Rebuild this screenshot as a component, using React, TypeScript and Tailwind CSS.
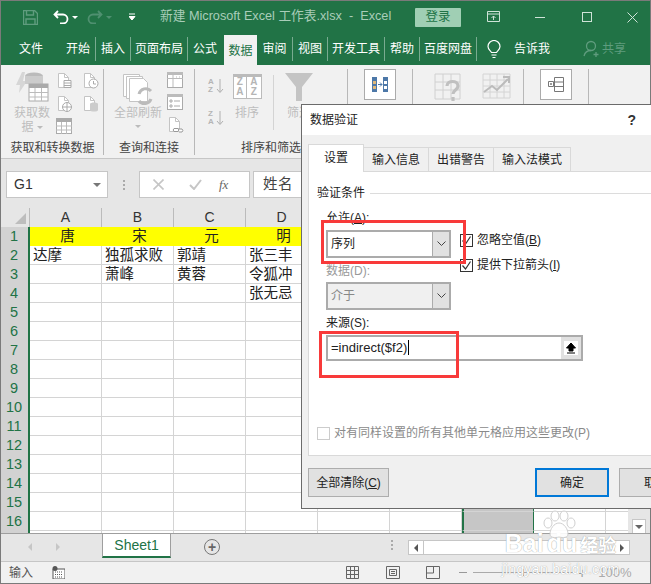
import type { ReactNode } from 'react'

const G = '#c4c4c4'

function Ico({ w = 16, h = 16, children, className = '' }: { w?: number; h?: number; children: ReactNode; className?: string }) {
  return (
    <svg width={w} height={h} viewBox={`0 0 ${w} ${h}`} fill="none" className={`block shrink-0 ${className}`}>
      {children}
    </svg>
  )
}

function DocIcon({ mark }: { mark: 'lines' | 'clock' | 'web' | 'db' | 'link' }) {
  return (
    <Ico w={17} h={17}>
      <path d="M2.5 1.5h6l4 4v10h-10z" stroke={G} fill="#fff" />
      <path d="M8.5 1.5v4h4" stroke={G} />
      {mark === 'lines' && <path d="M8 8.5h7v7H8zM8 11h7M8 13.5h7" stroke="#aaa" fill="#fff" />}
      {mark === 'clock' && (
        <>
          <circle cx="11.5" cy="11.5" r="4.5" stroke="#aaa" fill="#fff" />
          <path d="M11.5 9v3h2.5" stroke="#aaa" />
        </>
      )}
      {mark === 'web' && (
        <>
          <circle cx="11" cy="12" r="4.5" stroke="#aaa" fill="#fff" />
          <path d="M6.5 12h9M11 7.5v9" stroke="#aaa" />
        </>
      )}
      {mark === 'db' && <path d="M8 9c0-2 8-2 8 0v6c0 2-8 2-8 0z" fill="#ccc" />}
      {mark === 'link' && <path d="M7 12.5h4a2 2 0 010 3H7a2 2 0 010-3zM11 13h4a2 2 0 010 3h-3" stroke="#999" fill="#fff" />}
    </Ico>
  )
}

function TableIcon() {
  return (
    <Ico w={16} h={16}>
      <rect x="0.5" y="0.5" width="15" height="15" stroke="#aaa" fill="#fff" />
      <rect x="0" y="0" width="16" height="4" fill="#aaa" />
      <path d="M0 8h16M0 12h16M5.5 4v12M10.5 4v12" stroke="#bbb" />
    </Ico>
  )
}

function PanelIcon({ list = false }: { list?: boolean }) {
  return (
    <Ico w={16} h={16}>
      <rect x="0.5" y="0.5" width="15" height="15" stroke="#aaa" fill="#fff" />
      <rect x="0" y="0" width="16" height="3" fill="#bbb" />
      {list ? (
        <path d="M3 6h2v2H3zM3 11h2v2H3zM7 7h6M7 12h6" stroke="#aaa" />
      ) : (
        <path d="M6 3v12M0 6.5h16M9 5h1M12 5h1" stroke="#bbb" />
      )}
    </Ico>
  )
}

function SortIcon({ top, bottom }: { top: string; bottom: string }) {
  return (
    <div className="flex h-[16px] w-[16px] items-center">
      <div className="flex w-[8px] flex-col text-[8px] leading-[8px] font-bold text-[#b5b5b5]">
        <span>{top}</span>
        <span>{bottom}</span>
      </div>
      <Ico w={8} h={16}>
        <path d="M4 1v13M1 11l3 3.5 3-3.5" stroke="#b0b0b0" />
      </Ico>
    </div>
  )
}

function RibbonGroup({ label, className, children }: { label: string; className: string; children: ReactNode }) {
  return (
    <div className={`flex shrink-0 flex-col border-r border-[#b8b8b8] mt-[4px] h-[86px] ${className}`}>
      <div className="relative h-[69px]">{children}</div>
      <div className="mt-[4px] text-center text-[12px] leading-[14px] whitespace-nowrap text-[#444]">{label}</div>
    </div>
  )
}

function BoxButton({ children }: { children: ReactNode }) {
  return (
    <div className="mx-auto flex h-[31px] w-[32px] items-center justify-center border border-[#ababab] bg-white">{children}</div>
  )
}

const dim = 'text-[#bdbdbd]'

function TitleBar() {
  return (
    <div className="flex h-[32px] items-center bg-[#217346]">
      <Ico w={15} h={15} className="ml-[22px]">
        <path d="M.5.5h11l3 3v11H.5z" stroke="#5f9c7e" strokeWidth="1.4" />
        <path d="M3.5 1v4h7V1M3 14V9h9v5" stroke="#5f9c7e" strokeWidth="1.4" />
      </Ico>
      <Ico w={16} h={14} className="ml-[15px]">
        <path d="M5 1L1.5 4.5 5 8M2 4.5h8a4.5 4.5 0 010 9H7" stroke="#fff" strokeWidth="1.8" />
      </Ico>
      <span className="ml-[3px] border-x-[3px] border-t-[3px] border-x-transparent border-t-white" />
      <Ico w={16} h={14} className="ml-[9px]">
        <path d="M11 1l3.5 3.5L11 8M14 4.5H6a4.5 4.5 0 000 9h3" stroke="#4f9070" strokeWidth="1.8" />
      </Ico>
      <span className="ml-[3px] border-x-[3px] border-t-[3px] border-x-transparent border-t-[#4f9070]" />
      <Ico w={7} h={8} className="ml-[17px]">
        <path d="M0 1h6M0 3.5h6L3 7z" stroke="#fff" fill="#fff" strokeWidth="1" />
      </Ico>
      <span className="ml-[24px] w-[255px] text-[12.7px] whitespace-pre text-[#a9cdb9]">新建 Microsoft Excel 工作表.xlsx  -  Excel</span>
      <div className="ml-[0px] flex h-[19px] w-[46px] items-center justify-center rounded-[1px] bg-[#a0cfb4] text-[12.5px] text-[#217346]">登录</div>
      <Ico w={14} h={12} className="ml-[26px]">
        <path d="M.5.5h12v10H.5zM.5 3h12M6.5 9V5M4.5 7l2-2 2 2" stroke="#cfe3d8" />
      </Ico>
      <span className="ml-[34px] h-px w-[10px] bg-[#cfe3d8]" />
      <span className="ml-[37px] h-[10px] w-[10px] border border-[#cfe3d8]" />
      <Ico w={11} h={11} className="ml-[35px]">
        <path d="M.5.5l10 10M10.5.5l-10 10" stroke="#cfe3d8" />
      </Ico>
    </div>
  )
}

const tabs = [
  { label: '开始', cls: 'w-[35px] border-r' },
  { label: '插入', cls: 'w-[35px] border-r' },
  { label: '页面布局', cls: 'w-[57px] border-r' },
  { label: '公式', cls: 'w-[34px]' },
]
const tabs2 = [
  { label: '审阅', cls: 'w-[36px] border-r' },
  { label: '视图', cls: 'w-[35px] border-r' },
  { label: '开发工具', cls: 'w-[57px] border-r' },
  { label: '帮助', cls: 'w-[35px] border-r' },
  { label: '百度网盘', cls: 'w-[57px] border-r' },
]

function TabBar() {
  return (
    <div className="flex h-[32px] items-center bg-[#217346] text-[12px] text-white">
      <span className="w-[60px] text-center">文件</span>
      {tabs.map((t) => (
        <span key={t.label} className={`h-[24px] border-white/40 text-center leading-[24px] ${t.cls}`}>
          {t.label}
        </span>
      ))}
      <span className="ml-[2px] h-[30px] w-[33px] self-end bg-[#f1f1f1] text-center leading-[32px] text-[#217346]">数据</span>
      {tabs2.map((t) => (
        <span key={t.label} className={`h-[24px] border-white/40 text-center leading-[24px] ${t.cls}`}>
          {t.label}
        </span>
      ))}
      <Ico w={14} h={19} className="ml-[10px]">
        <path d="M4.5 12.5C3.5 10.5 1 9.500 1 6.500a6 6 0 0112 0c0 3-2.500 4-3.500 6zM4.500 15h5M5.500 17.500h3" stroke="#fff" strokeWidth="1.200" />
      </Ico>
      <span className="ml-[13px]">告诉我</span>
      <Ico w={18} h={18} className="ml-[33px]">
        <circle cx="8" cy="6" r="4.500" stroke="#5f9c7e" strokeWidth="1.300" />
        <path d="M1 16c1-4 4-5.500 7-5.500M13 12v5M10.500 14.500h5" stroke="#5f9c7e" strokeWidth="1.300" />
      </Ico>
      <span className="ml-[1px] text-[#5f9c7e]">共享</span>
    </div>
  )
}

function Ribbon() {
  return (
    <div className="flex h-[94px] items-start border-b border-[#c6c6c6] bg-[#f1f1f1]">
      <RibbonGroup label="获取和转换数据" className="ml-[1px] w-[102px]">
        <div className="flex gap-[5px] pl-[11px]">
          <div className={`mt-[1px] flex w-[38px] flex-col items-center text-[12px] leading-[14px] ${dim}`}>
            <Ico w={34} h={34}>
              <path d="M7 2L1 15h4l-1 8 8-12H8l2-9z" fill="#d6d6d6" />
              <ellipse cx="19" cy="6" rx="9" ry="3.500" fill="#bbb" />
              <path d="M10 6v8h18V6" fill="#ccc" />
              <rect x="14" y="14" width="19" height="17" fill="#fff" stroke="#aaa" />
              <rect x="14" y="14" width="19" height="4" fill="#aaa" />
              <path d="M14 22.500h19M14 27h19M20 18v13M26.500 18v13" stroke="#bbb" />
            </Ico>
            <span className="mt-[2px]">获取数</span>
            <span className="flex items-center gap-[3px]">
              据<span className="border-x-[3px] border-t-[3px] border-x-transparent border-t-[#bbb]" />
            </span>
          </div>
          <div className="mt-[3px] flex flex-col gap-[6px]">
            <DocIcon mark="lines" />
            <DocIcon mark="web" />
            <TableIcon />
          </div>
          <div className="mt-[3px] ml-[4px] flex flex-col gap-[6px]">
            <DocIcon mark="clock" />
            <DocIcon mark="db" />
          </div>
        </div>
      </RibbonGroup>
      <RibbonGroup label="查询和连接" className="w-[91px]">
        <div className="flex pl-[9px]">
          <div className={`mt-[4px] flex w-[50px] flex-col items-center text-[12px] leading-[14px] ${dim}`}>
            <Ico w={32} h={33}>
              <path d="M1.500 1.500h16v22h-16z" stroke={G} fill="#fff" />
              <path d="M4.500 3.500h16v22h-16z" stroke={G} fill="#fff" />
              <path d="M7.500 5.500h14l4 4v19h-18z" stroke={G} fill="#fff" />
              <path d="M17 21a7 7 0 0112-3M29 26a7 7 0 01-12 2" stroke="#bbb" strokeWidth="3" />
            </Ico>
            <span>全部刷新</span>
            <span className="mt-[5px] border-x-[3px] border-t-[3px] border-x-transparent border-t-[#bbb]" />
          </div>
          <div className="mt-[3px] ml-[4px] flex flex-col gap-[6px]">
            <PanelIcon />
            <PanelIcon list />
            <DocIcon mark="link" />
          </div>
        </div>
      </RibbonGroup>
      <RibbonGroup label="排序和筛选" className="w-[153px]">
        <div className="flex pl-[13px]">
          <div className="mt-[9px] flex flex-col gap-[16px]">
            <SortIcon top="A" bottom="Z" />
            <SortIcon top="Z" bottom="A" />
          </div>
          <div className={`ml-[7px] flex w-[32px] flex-col items-center text-[12px] leading-[14px] ${dim}`}>
            <div className="mt-[5px] grid h-[25px] w-[29px] grid-cols-2 border border-t-[3px] border-[#bbb] bg-white text-center text-[10px] leading-[10px] font-bold text-[#b5b5b5]">
              <span className="border-r border-[#bbb]">Z<br />A</span>
              <span>A<br />Z</span>
            </div>
            <span className="mt-[7px]">排序</span>
          </div>
          <div className="ml-[10px] mt-[6px] h-[55px] border-r border-[#d4d4d4]" />
          <div className={`ml-[10px] flex w-[30px] flex-col items-center text-[12px] leading-[14px] ${dim}`}>
            <Ico w={28} h={28} className="mt-[4px]">
              <path d="M0 0h28L17 14v14h-6V14z" fill="#c4c4c4" />
            </Ico>
            <span className="mt-[5px]">筛选</span>
          </div>
        </div>
      </RibbonGroup>
      <RibbonGroup label="" className="w-[65px]">
        <BoxButton>
          <Ico w={16} h={15}>
            <path d="M0 0h5v15H0zM11 0h5v15h-5z" fill="#4d78a8" />
            <path d="M1 4h3v3H1zM1 9h3v3H1z" fill="#e0b878" />
            <path d="M12 4h3v3h-3zM12 9h3v3h-3z" fill="#fff" />
            <path d="M6 7.500h4M8 5.500l2 2-2 2" stroke="#4d78a8" />
          </Ico>
        </BoxButton>
      </RibbonGroup>
      <RibbonGroup label="" className="w-[111px]">
        <div className="mt-[4px] flex gap-[18px] pl-[21px]">
          <Ico w={30} h={30}>
            <path d="M1 1h25v25H1zM1 9h25M1 17h25M9 1v25M17 1v25" stroke="#d0d0d0" />
            <path d="M13 13c0-6 11-6 11 0 0 4-5 4-5 8M19 24v4" stroke="#c0c0c0" strokeWidth="3.200" />
          </Ico>
          <Ico w={29} h={26}>
            <path d="M1 1h27v24H1zM1 7h27M1 13h27M1 19h27M8 1v24M15 1v24M22 1v24" stroke="#d4d4d4" />
            <path d="M2 19l8-6 5 4 11-11M21 4h6v6" stroke="#bbb" strokeWidth="2" />
          </Ico>
        </div>
      </RibbonGroup>
      <RibbonGroup label="" className="w-[65px]">
        <BoxButton>
          <Ico w={16} h={15}>
            <path d="M6.500.5h9v14h-9zM6.500 5h9M6.500 9.500h9M.5 4.500h5v5h-5zM3 6v2M2 7h2" stroke="#777" />
          </Ico>
        </BoxButton>
      </RibbonGroup>
    </div>
  )
}

function FormulaBar() {
  return (
    <div className="flex h-[49px] bg-[#e6e6e6] pt-[12px] pl-[5px]">
      <div className="flex h-[27px] w-[102px] items-center justify-between border border-[#c6c6c6] bg-white pr-[6px] pl-[7px] text-[14px] text-[#333]">
        G1
        <span className="border-x-[4px] border-t-[4px] border-x-transparent border-t-[#777]" />
      </div>
      <div className="ml-[15px] flex h-[27px] flex-col justify-center gap-[2px]">
        <span className="h-[2px] w-[2px] bg-[#aaa]" />
        <span className="h-[2px] w-[2px] bg-[#aaa]" />
        <span className="h-[2px] w-[2px] bg-[#aaa]" />
      </div>
      <div className="ml-[14px] flex h-[27px] w-[111px] items-center border border-[#c6c6c6] bg-white">
        <Ico w={11} h={11} className="ml-[13px]">
          <path d="M.5.5l10 10M10.500.5l-10 10" stroke="#c6c6c6" strokeWidth="1.600" />
        </Ico>
        <Ico w={13} h={11} className="ml-[25px]">
          <path d="M1 6l4 4 7-9" stroke="#c6c6c6" strokeWidth="2" />
        </Ico>
        <span className="ml-[17px] [font-family:'Liberation_Serif',serif] text-[13px] text-[#666] italic">fx</span>
      </div>
      <div className="ml-[3px] flex h-[27px] flex-1 items-center border border-[#c6c6c6] bg-white pl-[9px] text-[14.5px] tracking-[0.5px] text-[#444]">姓名</div>
    </div>
  )
}

const cols = ['A', 'B', 'C', 'D', 'E', 'F', 'G', 'H', 'I']
const data: Record<number, string[]> = {
  1: ['唐', '宋', '元', '明'],
  2: ['达摩', '独孤求败', '郭靖', '张三丰'],
  3: ['', '萧峰', '黄蓉', '令狐冲'],
  4: ['', '', '', '张无忌'],
}
const rows = Array.from({ length: 17 }, (_, i) => i + 1)

function Sheet() {
  return (
    <div className="relative flex min-h-0 flex-1 overflow-hidden bg-white">
      <div className="min-w-0 flex-1 overflow-hidden">
        <div className="flex h-[19px] bg-[#e6e6e6] text-[14px] leading-[18px] text-[#333]">
          <div className="flex w-[29px] shrink-0 items-end justify-end border-r border-[#bbb] pr-[3px] pb-[3px]">
            <span className="border-b-[11px] border-l-[11px] border-b-[#bdbdbd] border-l-transparent" />
          </div>
          {cols.map((c) => (
            <div key={c} className={`w-[72px] shrink-0 border-r border-[#bbb] text-center ${c === 'G' ? 'bg-[#c6c6c6]' : ''}`}>
              {c}
            </div>
          ))}
        </div>
        {rows.map((r) => (
          <div key={r} className="flex h-[19px]">
            <div className="w-[29px] shrink-0 border-r-2 border-r-[#217346] bg-[#d2d2d2] pr-[1px] text-center text-[14.5px] leading-[19px] text-[#217346]">{r}</div>
            {cols.map((c, i) => {
              const v = data[r]?.[i] ?? ''
              return (
                <div
                  key={c}
                  className={`w-[72px] shrink-0 overflow-visible pl-[3px] text-[14.5px] leading-[18px] whitespace-nowrap text-[#222] ${
                    r === 1 && i < 4 ? 'bg-[#ffff00] text-center' : 'border-r border-b border-[#d4d4d4]'
                  } ${c === 'G' ? 'border-x-2 border-x-[#217346] bg-[#c6c6c6]' : ''}`}
                >
                  {v}
                </div>
              )
            })}
          </div>
        ))}
      </div>
      <div className="flex w-[22px] shrink-0 flex-col items-center justify-end bg-[#e6e6e6] pr-[1px]">
        <div className="mb-[-1px] flex h-[15px] w-[14px] items-center justify-center border border-[#c6c6c6] bg-white">
          <span className="border-x-[4px] border-t-[4px] border-x-transparent border-t-[#666]" />
        </div>
      </div>
    </div>
  )
}

function SheetTabs() {
  return (
    <div className="flex h-[28px] shrink-0 border-t border-[#9e9e9e] bg-[#e6e6e6]">
      <span className="mt-[9px] ml-[27px] h-0 w-0 border-y-[4px] border-r-[4px] border-y-transparent border-r-[#c6c6c6]" />
      <span className="mt-[9px] ml-[24px] h-0 w-0 border-y-[4px] border-l-[4px] border-y-transparent border-l-[#c6c6c6]" />
      <div className="ml-[42px] h-[24px] w-[69px] border-x border-b-2 border-x-[#9e9e9e] border-b-[#217346] bg-white text-center text-[14px] leading-[22px] text-[#217346]">Sheet1</div>
      <div className="mt-[5px] ml-[33px] flex h-[16px] w-[16px] items-center justify-center rounded-full border border-[#777] text-[14px] leading-none font-bold text-[#666]">+</div>
      <div className="mt-[6px] ml-[171px] flex h-[12px] flex-col gap-[2px]">
        <span className="h-[2px] w-[2px] bg-[#aaa]" />
        <span className="h-[2px] w-[2px] bg-[#aaa]" />
        <span className="h-[2px] w-[2px] bg-[#aaa]" />
      </div>
      <div className="mt-[6px] ml-[15px] flex h-[15px] w-[222px] border border-[#c6c6c6] bg-[#e6e6e6]">
        <div className="flex w-[14px] items-center justify-center bg-white">
          <span className="border-y-[4px] border-r-[4px] border-y-transparent border-r-[#555]" />
        </div>
        <div className="w-[167px] border-l border-[#c6c6c6] bg-white" />
        <div className="flex-1" />
        <div className="flex w-[14px] items-center justify-center bg-white">
          <span className="border-y-[4px] border-l-[4px] border-y-transparent border-l-[#555]" />
        </div>
      </div>
    </div>
  )
}

function StatusBar() {
  return (
    <div className="flex h-[22px] shrink-0 items-center border-t border-[#c6c6c6] bg-[#f1f1f1] text-[12px] text-[#555]">
      <span className="ml-[8px]">输入</span>
      <Ico w={13} h={13} className="ml-[19px]">
        <path d="M1 3h12v10H1z" fill="#fff" stroke="#555" />
        <path d="M3 6h8M3 8.500h8M3 11h8" stroke="#555" strokeDasharray="1 1" />
        <circle cx="3" cy="2.500" r="2.500" fill="#555" />
      </Ico>
      <Ico w={13} h={13} className="ml-[281px]">
        <path d="M.5.5h12v12H.5zM.5 4.500h12M.5 8.500h12M4.500.5v12M8.500.5v12" stroke="#666" />
      </Ico>
      <Ico w={14} h={13} className="ml-[27px]">
        <path d="M.5.5h13v12H.5z" stroke="#666" />
        <path d="M3.500 3.500h7v6h-7zM5 5.500h4M5 7.500h4" stroke="#666" />
      </Ico>
      <Ico w={14} h={13} className="ml-[26px]">
        <path d="M.5.5h13v12H.5zM.5 7h7V.5" stroke="#666" />
      </Ico>
      <span className="ml-[19px] h-px w-[8px] bg-[#999]" />
      <div className="relative ml-[6px] h-px w-[100px] bg-[#aaa]">
        <span className="absolute top-[-3px] left-[50px] h-[7px] w-px bg-[#999]" />
      </div>
      <span className="ml-[5px] text-[14px] leading-none text-[#999]">+</span>
      <span className="ml-[12px] text-[13px] text-[#aaa]">100%</span>
    </div>
  )
}

function Check({ checked = false, disabled = false }: { checked?: boolean; disabled?: boolean }) {
  return (
    <span className={`flex h-[13px] w-[13px] shrink-0 items-center justify-center border bg-white ${disabled ? 'border-[#ccc]' : 'border-[#333]'}`}>
      {checked && (
        <Ico w={11} h={11}>
          <path d="M1.500 5.500l3 3.500 5-7.500" stroke="#333" strokeWidth="1.200" />
        </Ico>
      )}
    </span>
  )
}

function SelectBox({ value, disabled = false }: { value: string; disabled?: boolean }) {
  return (
    <div className={`flex h-[28px] w-[125px] border-2 border-[#ababab] text-[12px] ${disabled ? 'bg-[#f0f0f0] text-[#888]' : 'bg-white text-[#222]'}`}>
      <span className="flex-1 pt-[3px] pl-[3px]">{value}</span>
      <span className="flex w-[17px] items-center justify-center border-l border-[#ababab] bg-[#e1e1e1]">
        <Ico w={9} h={6}>
          <path d="M.5.5l4 4 4-4" stroke="#444" />
        </Ico>
      </span>
    </div>
  )
}

const dialogTabs = ['输入信息', '出错警告', '输入法模式']

function Dialog() {
  return (
    <div className="absolute top-[104px] left-[301px] flex h-[405px] w-[420px] flex-col border border-[#6b6b6b] bg-[#f0f0f0] text-[12px] text-[#222]">
      <div className="flex h-[30px] items-center justify-between bg-white pr-[84px] pl-[8px]">
        <span>数据验证</span>
        <span className="text-[14px] font-bold text-[#333]">?</span>
      </div>
      <div className="flex h-[36px] items-end pl-[6px]">
        <div className="z-10 mb-[-1px] h-[28px] w-[56px] border-x border-t border-[#d9d9d9] bg-white text-center leading-[26px]">设置</div>
        {dialogTabs.map((t) => (
          <div key={t} className="h-[24px] border-t border-r border-[#d9d9d9] bg-[#f0f0f0] px-[8px] text-center leading-[24px]">
            {t}
          </div>
        ))}
      </div>
      <div className="ml-[6px] flex h-[285px] flex-col border border-[#d9d9d9] bg-white pl-[8px]">
        <div className="mt-[12px] flex items-center gap-[5px]">
          <span>验证条件</span>
          <span className="h-px flex-1 bg-[#dcdcdc]" />
        </div>
        <div className="pl-[9px]">
          <div className="mt-[8px] leading-[16px]">允许(<u>A</u>):</div>
          <div className="mt-[4px] flex h-[28px]">
            <SelectBox value="序列" />
            <div className="mt-[2px] ml-[9px] flex flex-col gap-[9px]">
              <label className="flex items-center gap-[4px] leading-[16px]">
                <Check checked />
                <span>忽略空值(<u>B</u>)</span>
              </label>
              <label className="flex items-center gap-[4px] leading-[16px]">
                <Check checked />
                <span>提供下拉箭头(<u>I</u>)</span>
              </label>
            </div>
          </div>
          <div className="mt-[5px] leading-[16px] text-[#999]">数据(D):</div>
          <div className="mt-[3px]">
            <SelectBox value="介于" disabled />
          </div>
          <div className="mt-[5px] leading-[16px]">来源(S):</div>
          <div className="mt-[4px] flex h-[26px] w-[257px] border-2 border-[#ababab] bg-white">
            <span className="flex-1 pl-[3px] text-[13px] leading-[21px]">
              =indirect($f2)<span className="ml-px inline-block h-[15px] w-px translate-y-[3px] bg-black" />
            </span>
            <span className="flex w-[20px] items-center justify-center bg-[#e1e1e1]">
              <span className="flex h-[14px] w-[14px] items-center justify-center bg-white">
                <Ico w={10} h={11}>
                  <path d="M5 0l4.500 5H7v3H3V5H.5zM1 10h8" stroke="#000" fill="#000" />
                </Ico>
              </span>
            </span>
          </div>
        </div>
        <div className="mt-[64px] flex items-center gap-[4px] leading-[16px] text-[#8a8a8a]">
          <Check disabled />
          <span>对有同样设置的所有其他单元格应用这些更改(P)</span>
        </div>
      </div>
      <div className="mt-[12px] flex pl-[6px]">
        <div className="flex h-[29px] w-[81px] items-center justify-center border border-[#adadad] bg-[#e1e1e1]">全部清除(<u>C</u>)</div>
        <div className="ml-[146px] flex h-[29px] w-[74px] items-center justify-center border-2 border-[#0078d7] bg-[#e1e1e1]">确定</div>
        <div className="ml-[10px] flex h-[29px] w-[74px] items-center justify-center border border-[#adadad] bg-[#e1e1e1]">取消</div>
      </div>
    </div>
  )
}

function Watermark() {
  return (
    <div className="pointer-events-none absolute top-[512px] left-[498px] flex w-[125px] flex-col items-center text-white [text-shadow:0_0_1px_#8a8a8a]">
      <Ico w={38} h={30} className="absolute top-[-2px] left-[42px] opacity-90">
        <ellipse cx="8" cy="13" rx="4" ry="5" fill="#fff" stroke="#ccc" />
        <ellipse cx="15" cy="6" rx="4" ry="5" fill="#fff" stroke="#ccc" />
        <ellipse cx="24" cy="6" rx="4" ry="5" fill="#fff" stroke="#ccc" />
        <ellipse cx="31" cy="13" rx="4" ry="5" fill="#fff" stroke="#ccc" />
        <path d="M19 13c5 0 9 6 9 11 0 4-5 4-9 3-4 1-9 1-9-3 0-5 4-11 9-11z" fill="#fff" stroke="#ccc" />
      </Ico>
      <div className="mt-[18px] flex items-baseline text-[25px] leading-[26px] font-bold whitespace-nowrap">
        Bai<span className="ml-[3px]">du</span>
        <span className="ml-[3px] text-[18px]">经验</span>
      </div>
      <div className="mt-[2px] text-[14px] leading-[16px] tracking-[0.3px] whitespace-nowrap">jingyan.baidu.com</div>
    </div>
  )
}

export default function App() {
  return (
    <div className="relative h-[584px] w-[651px] overflow-hidden [font-family:'Liberation_Sans','Noto_Sans_CJK_SC',sans-serif]">
      <div className="flex h-full flex-col border border-[#7a7a7a] bg-[#e6e6e6]">
        <TitleBar />
        <TabBar />
        <Ribbon />
        <FormulaBar />
        <Sheet />
        <SheetTabs />
        <StatusBar />
      </div>
      <Dialog />
      <div className="absolute top-[220px] left-[321px] h-[44px] w-[145px] border-[3px] border-[#f83a3a]" />
      <div className="absolute top-[331px] left-[319px] h-[47px] w-[140px] border-[3px] border-[#f83a3a]" />
      <Watermark />
    </div>
  )
}
